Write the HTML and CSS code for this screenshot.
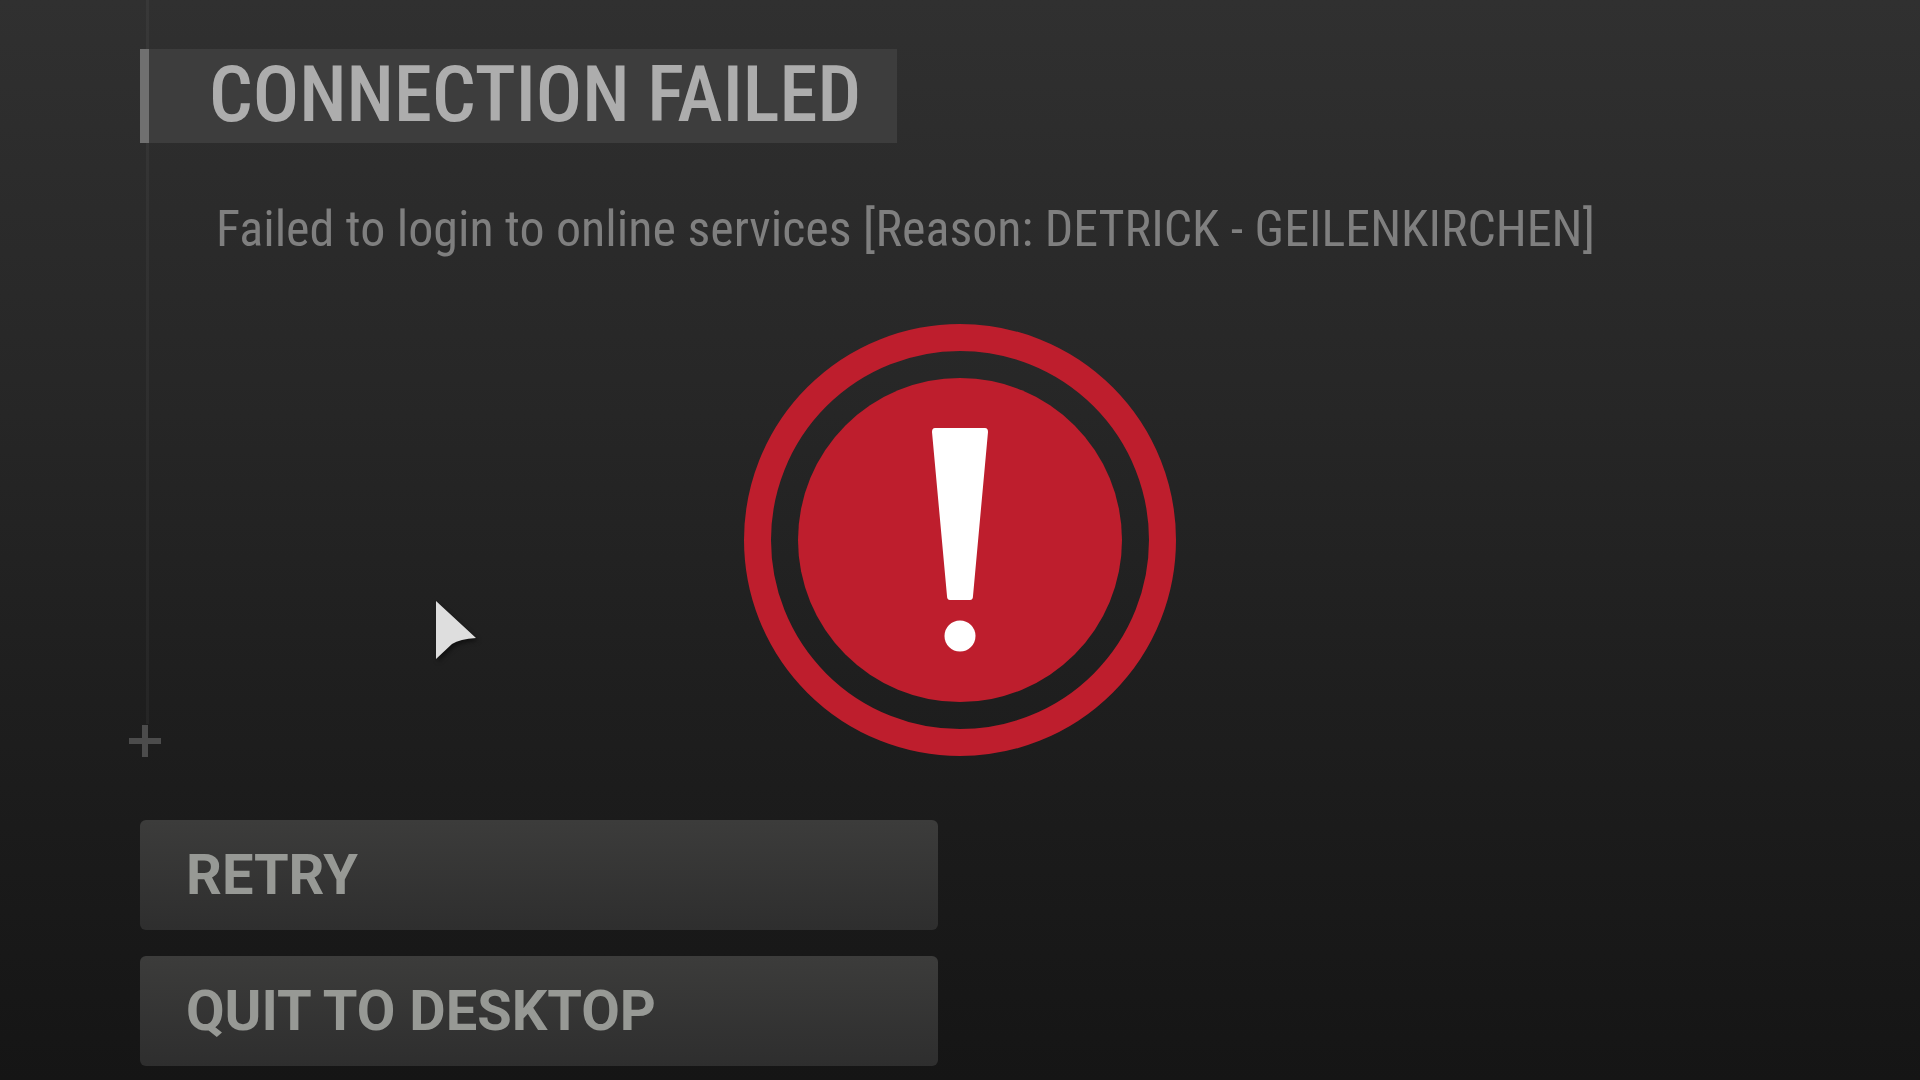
FILE: index.html
```html
<!DOCTYPE html>
<html lang="en">
<head>
    <title>Connection Failed</title>
    <meta charset="UTF-8">
    <meta name="viewport" content="width=device-width, initial-scale=1.0">
    <link rel="stylesheet" href="styles.css">
</head>
<body>
    <main class="screen">
        <section class="message">
            <h1 class="title">CONNECTION FAILED</h1>
            <p class="reason">Failed to login to online services [Reason: DETRICK - GEILENKIRCHEN]</p>
        </section>

        <svg class="plus" viewBox="0 0 34 34" aria-hidden="true">
            <path d="M17 1v32M1 17h32" stroke="#4c4c4c" stroke-width="6"/>
        </svg>

        <div class="actions">
            <button type="button" class="action">RETRY</button>
            <button type="button" class="action">QUIT TO DESKTOP</button>
        </div>
    </main>

    <svg class="alert" viewBox="0 0 432 432" role="img" aria-label="Error">
        <circle cx="216" cy="216" r="202.5" fill="none" stroke="#be1e2d" stroke-width="27"/>
        <circle cx="216" cy="216" r="162" fill="#be1e2d"/>
        <path d="M191 104h50q3 0 3 4l-15 164q0 4-3 4h-20q-3 0-3-4l-15-164q0-4 3-4z" fill="#fff"/>
        <circle cx="216" cy="312" r="15.5" fill="#fff"/>
    </svg>

    <svg class="cursor" viewBox="0 0 42 60" aria-hidden="true">
        <path d="M1 1l40 37q-16 1-24 6L1 59z" fill="#dedede"/>
    </svg>
</body>
</html>
```

FILE: styles.css
```css
* {
    box-sizing: border-box;
}

body {
    position: relative;
    margin: 0;
    min-height: 100vh;
    font-family: "Roboto Condensed", "Liberation Sans Narrow", "Liberation Sans", sans-serif;
    background: linear-gradient(#303030, #272727 35%, #1e1e1e 65%, #151515);
}

.screen {
    display: flex;
    flex-direction: column;
    align-items: flex-start;
    min-height: 100vh;
    padding: 0 140px 14px;
}

.message {
    flex: 1;
    margin-left: 6px;
    padding-top: 49px;
    border-left: 3px solid rgba(255, 255, 255, 0.04);
}

.title {
    width: fit-content;
    margin: 0 0 48px -9px;
    padding: 0 36px 2px 60px;
    border-left: 9px solid #707070;
    background-color: #3d3d3d;
    color: #adadad;
    font-size: 77px;
    font-weight: 500;
    line-height: 92px;
}

.reason {
    margin: 0 0 0 67px;
    color: #7f7f7f;
    font-size: 50px;
    line-height: 76px;
}

.plus {
    width: 34px;
    height: 34px;
    margin: 0 0 62px -12px;
}

.actions {
    display: flex;
    flex-direction: column;
    gap: 26px;
    width: 100%;
    max-width: 798px;
}

.action {
    padding: 0 46px;
    border: none;
    border-radius: 6px;
    background: linear-gradient(#3c3c3b, #2e2e2e);
    color: #979995;
    font-family: Roboto, "Liberation Sans", sans-serif;
    font-size: 56px;
    font-weight: bold;
    line-height: 110px;
    text-align: left;
    cursor: pointer;
}

.action:hover {
    background: #444;
}

.alert {
    position: absolute;
    top: 50%;
    left: 50%;
    width: 432px;
    transform: translate(-50%, -50%);
}

.cursor {
    position: absolute;
    top: 600px;
    left: 435px;
    width: 42px;
    filter: drop-shadow(2px 3px 2px #111);
}
```
